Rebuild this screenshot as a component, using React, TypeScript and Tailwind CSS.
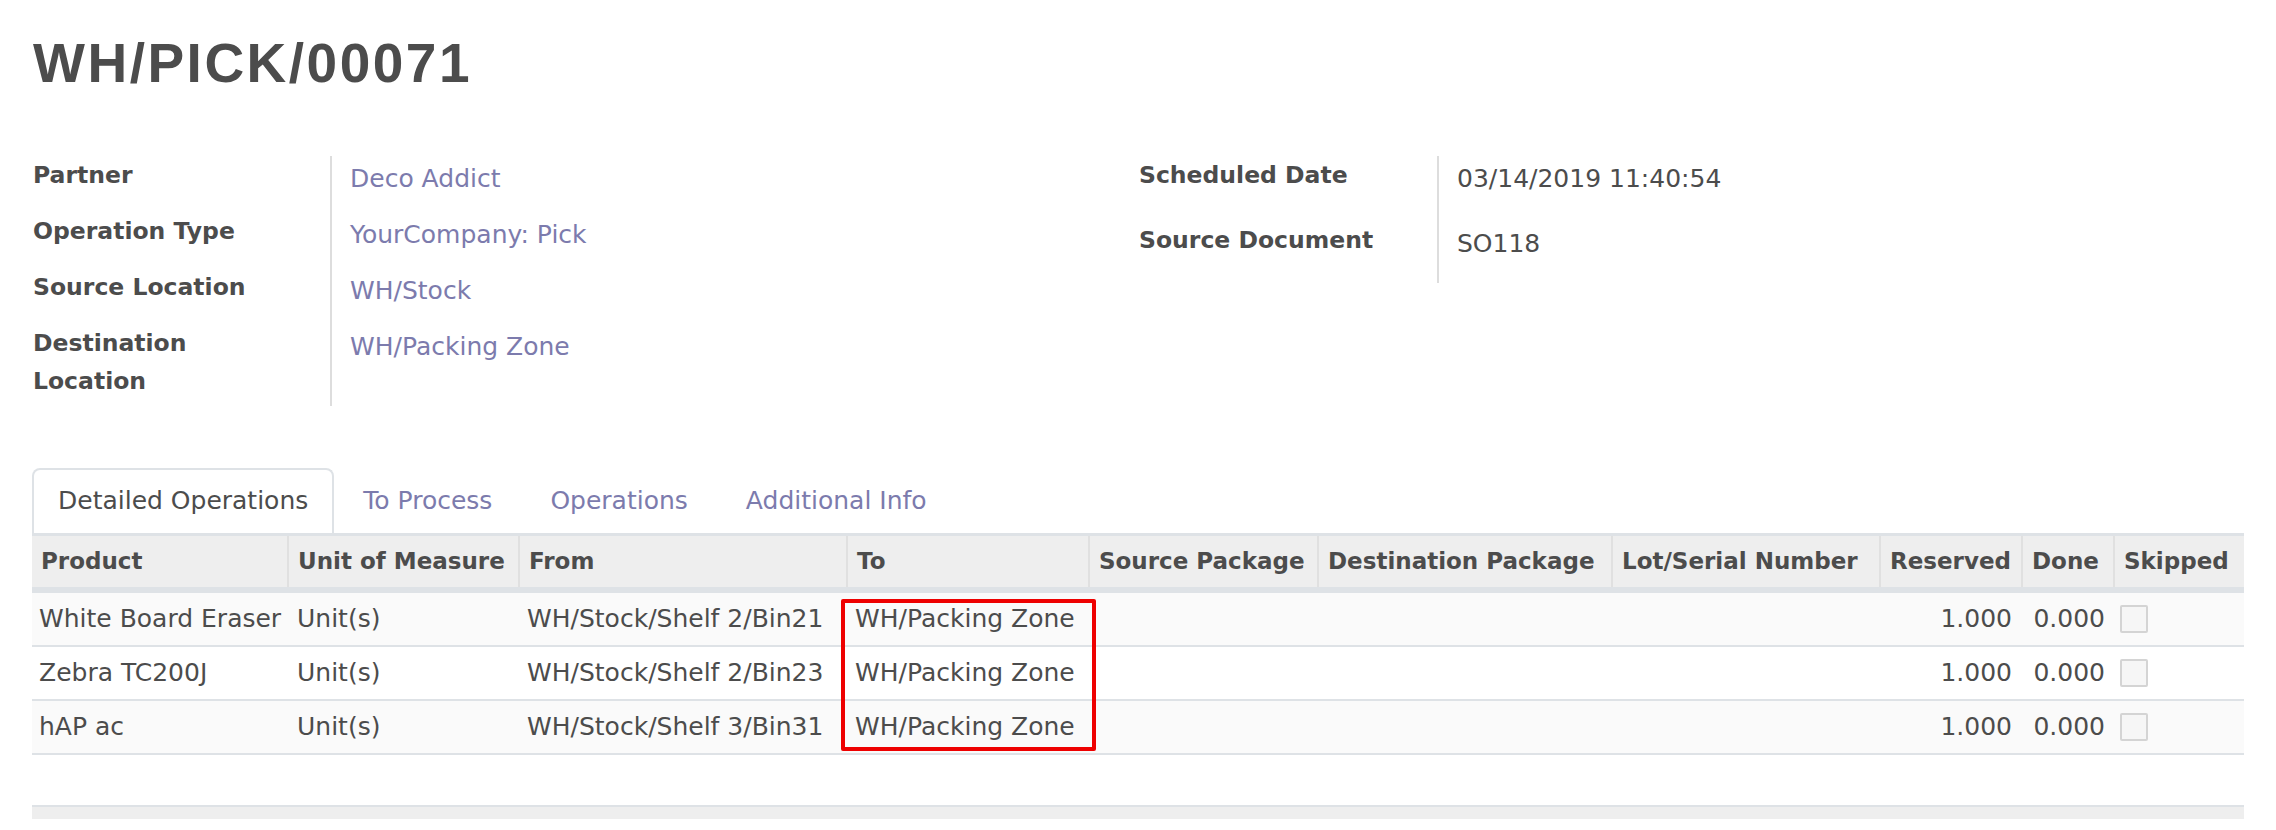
// Picking form: header fields, tabs and detailed operations list
const cols = "grid grid-cols-[257px_231px_328px_242px_229px_294px_268px_142px_92px_129px]";

const headers = [
  "Product",
  "Unit of Measure",
  "From",
  "To",
  "Source Package",
  "Destination Package",
  "Lot/Serial Number",
  "Reserved",
  "Done",
  "Skipped",
];

const lines = [
  { product: "White Board Eraser", from: "WH/Stock/Shelf 2/Bin21" },
  { product: "Zebra TC200J", from: "WH/Stock/Shelf 2/Bin23" },
  { product: "hAP ac", from: "WH/Stock/Shelf 3/Bin31" },
];

function Label({ text, h }: { text: string; h: string }) {
  return (
    <div className={`${h} border-r-2 border-[#dddddd] pr-[48px] pl-[1px]`}>
      <div className="text-[23.5px] font-bold leading-[38px] text-[#4c4c4c]">{text}</div>
    </div>
  );
}

function Value({ text, link = true }: { text: string; link?: boolean }) {
  return (
    <div className={`pl-[18px] pt-[4px] text-[25px] leading-[38px] ${link ? "text-[#7c7bad]" : "text-[#4c4c4c]"}`}>
      {text}
    </div>
  );
}

export default function App() {
  return (
    <div className="min-h-[830px] bg-white px-[32px] font-['DejaVu_Sans',sans-serif] text-[#4c4c4c]">
      <h1 className="mt-[36px] pl-[1px] font-['Liberation_Sans',Arial,sans-serif] text-[55px] font-bold leading-[55px] tracking-[2.5px]">
        WH/PICK/00071
      </h1>

      {/* main fields */}
      <div className="mt-[65px] grid grid-cols-2">
        <div className="grid grid-cols-[300px_1fr] content-start">
          <Label text="Partner" h="h-[56px]" />
          <Value text="Deco Addict" />
          <Label text="Operation Type" h="h-[56px]" />
          <Value text="YourCompany: Pick" />
          <Label text="Source Location" h="h-[56px]" />
          <Value text="WH/Stock" />
          <Label text="Destination Location" h="h-[82px]" />
          <Value text="WH/Packing Zone" />
        </div>
        <div className="grid grid-cols-[301px_1fr] content-start">
          <Label text="Scheduled Date" h="h-[65px]" />
          <Value text="03/14/2019 11:40:54" link={false} />
          <Label text="Source Document" h="h-[62px]" />
          <Value text="SO118" link={false} />
        </div>
      </div>

      {/* tabs */}
      <div className="mt-[62px] flex text-[25px] leading-[38px]">
        <div className="rounded-t-[8px] border-2 border-b-0 border-[#dee2e6] bg-white px-[24px] pt-[12px] pb-[13px] text-[#4c4c4c]">
          Detailed Operations
        </div>
        {["To Process", "Operations", "Additional Info"].map((t) => (
          <div key={t} className="border-2 border-b-0 border-transparent px-[27px] pt-[12px] pb-[13px] text-[#7c7bad]">
            {t}
          </div>
        ))}
      </div>

      {/* detailed operations list */}
      <div className="relative border-t-[3px] border-[#dee2e6]">
        <div className={`${cols} h-[57px] border-b-[6px] border-[#dee2e6] bg-[#eeeeee] text-[23px] font-bold`}>
          {headers.map((h, i) => (
            <div
              key={h}
              className={`flex items-center whitespace-nowrap pl-[9px] ${i < headers.length - 1 ? "border-r-2 border-[#e0e0e0]" : ""}`}
            >
              {h}
            </div>
          ))}
        </div>

        {lines.map((l, i) => (
          <div
            key={l.product}
            className={`${cols} h-[54px] border-b-2 border-[#dee2e6] text-[25px] ${i % 2 === 0 ? "bg-[#fafafa]" : "bg-white"}`}
          >
            <div className="flex items-center whitespace-nowrap pl-[7px]">{l.product}</div>
            <div className="flex items-center pl-[8px]">Unit(s)</div>
            <div className="flex items-center whitespace-nowrap pl-[7px]">{l.from}</div>
            <div className="flex items-center whitespace-nowrap pl-[7px]">WH/Packing Zone</div>
            <div />
            <div />
            <div />
            <div className="flex items-center justify-end pr-[11px]">1.000</div>
            <div className="flex items-center justify-end pr-[10px]">0.000</div>
            <div className="flex items-center pl-[5px]">
              <div className="h-[28px] w-[28px] rounded-[2px] border-2 border-[#d4d4d4] bg-[#f6f6f6]" />
            </div>
          </div>
        ))}

        <div className="mt-[50px] h-[14px] border-t-2 border-[#dee2e6] bg-[#eeeeee]" />

        {/* highlight annotation */}
        <div className="absolute left-[809px] top-[63px] h-[152px] w-[255px] rounded-[2px] border-4 border-[#ee0000]" />
      </div>
    </div>
  );
}
